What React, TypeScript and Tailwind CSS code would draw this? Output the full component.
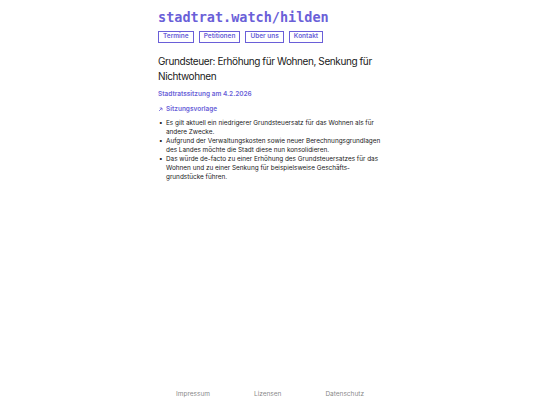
export default function App() {
  return (
    <div className="min-h-[405px] flex flex-col bg-white text-[#1a1a1a]" style={{ fontFamily: "Inter, 'Noto Sans', sans-serif" }}>
      <main className="w-[224px] mx-auto flex-1 pt-[8px]">
        <h1 className="text-[13.5px] leading-[19px] font-bold text-[#6a5fd8]" style={{ fontFamily: "'DejaVu Sans Mono', monospace" }}>
          stadtrat.watch/hilden
        </h1>
        <nav className="flex gap-[5px] mt-[4px]">
          {["Termine", "Petitionen", "Über uns", "Kontakt"].map((t) => (
            <a key={t} className="border border-[#6a5fd8] text-[#6a5fd8] text-[6.5px] font-semibold px-[4px] h-[12px] flex items-center">
              {t}
            </a>
          ))}
        </nav>
        <h2 className="mt-[11px] text-[10px] tracking-[-0.4px] leading-[15px] text-[#1a1a1a]">
          Grundsteuer: Erhöhung für Wohnen, Senkung für Nichtwohnen
        </h2>
        <p className="mt-[6px] text-[6.5px] font-semibold text-[#6a5fd8]">Stadtratssitzung am 4.2.2026</p>
        <p className="mt-[5px] text-[6.5px] font-semibold text-[#6a5fd8] flex items-center gap-[3px]">
          <svg width="5" height="5" viewBox="0 0 10 10" fill="none" stroke="#6a5fd8" strokeWidth="1.6">
            <path d="M2 8 L8 2 M3.5 2 H8 V6.5" />
          </svg>
          Sitzungsvorlage
        </p>
        <ul className="mt-[4px] text-[6.4px] leading-[9px] text-[#1a1a1a]">
          {[
            "Es gilt aktuell ein niedrigerer Grundsteuersatz für das Wohnen als für andere Zwecke.",
            "Aufgrund der Verwaltungskosten sowie neuer Berechnungsgrundlagen des Landes möchte die Stadt diese nun konsolidieren.",
            "Das würde de-facto zu einer Erhöhung des Grundsteuersatzes für das Wohnen und zu einer Senkung für beispielsweise Geschäfts\u00ADgrundstücke führen.",
          ].map((t) => (
            <li key={t} className="flex">
              <span className="w-[8px] shrink-0 pl-[1px]">•</span>
              <span>{t}</span>
            </li>
          ))}
        </ul>
      </main>
      <footer className="flex justify-center gap-[44px] pb-[5px] text-[6.5px] text-[#8a8a8a]">
        <span>Impressum</span>
        <span>Lizensen</span>
        <span>Datenschutz</span>
      </footer>
    </div>
  );
}
